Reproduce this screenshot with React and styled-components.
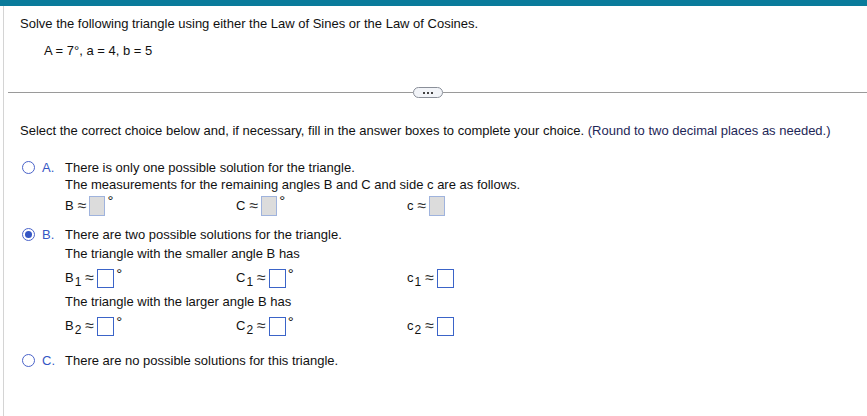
import styled, { createGlobalStyle } from "styled-components";

const GlobalStyle = createGlobalStyle`
  html, body {
    margin: 0;
    background: #fff;
  }
  body {
    font-family: "Liberation Sans", Arial, sans-serif;
    font-size: 13px;
    color: #111;
  }
`;

const Page = styled.div`
  border-top: 6px solid #0a7b9b;
  height: 410px;
  display: flex;
`;

const Frame = styled.div`
  margin-left: 3px;
  border-left: 1px solid #d4d4d4;
  flex: 1;
  padding-top: 10px;
`;

const Inner = styled.div`
  padding-left: 16px;
`;

const Line = styled.div`
  line-height: 16px;
  white-space: nowrap;
  padding-left: ${(p) => p.indent || 0}px;
  margin-top: ${(p) => p.top || 0}px;
`;

const Hint = styled.span`
  color: #1e2757;
`;

const Divider = styled.div`
  margin: 28px 0 0 4px;
  display: flex;
  align-items: center;
  &::before {
    content: "";
    width: 405px;
    height: 1px;
    background: #9a9a9a;
  }
  &::after {
    content: "";
    flex: 1;
    height: 1px;
    background: #9a9a9a;
  }
`;

const Pill = styled.div`
  width: 28px;
  height: 9px;
  border: 1px solid #8a8f99;
  border-radius: 6px;
  background: #f2f4f8;
  display: flex;
  align-items: center;
  justify-content: center;
  gap: 2px;
  i {
    width: 2px;
    height: 2px;
    background: #444;
  }
`;

const Choices = styled.div`
  margin-top: 21px;
  display: flex;
  flex-direction: column;
`;

const Choice = styled.div`
  display: flex;
  margin-top: ${(p) => p.top}px;
`;

const Radio = styled.div`
  width: 11px;
  height: 11px;
  border: 1.5px solid #4a63c9;
  border-radius: 50%;
  margin: 1px 7px 0 2px;
  display: flex;
  align-items: center;
  justify-content: center;
  flex-shrink: 0;
  &::after {
    content: "";
    width: 7px;
    height: 7px;
    border-radius: 50%;
    background: ${(p) => (p.checked ? "#3556c4" : "transparent")};
  }
`;

const Letter = styled.span`
  color: #3556c4;
  width: 23px;
  line-height: 16px;
  flex-shrink: 0;
`;

const Body = styled.div`
  display: flex;
  flex-direction: column;
`;

const AnswerRow = styled.div`
  display: grid;
  grid-template-columns: 171px 171px auto;
  margin-top: ${(p) => p.top}px;
  height: 20px;
  align-items: center;
`;

const Cell = styled.div`
  display: flex;
  align-items: center;
  white-space: nowrap;
`;

const Label = styled.span`
  display: flex;
  align-items: center;
  line-height: 16px;
`;

const Sub = styled.span`
  font-size: 12px;
  line-height: 12px;
  position: relative;
  top: 4px;
  margin-left: 1px;
`;

const Approx = styled.span`
  font-family: "Liberation Sans", Arial, sans-serif;
  font-size: 16px;
  line-height: 16px;
  color: #333;
  margin: 0 3px 0 4px;
`;

const Box = styled.span`
  display: inline-block;
  box-sizing: border-box;
  width: ${(p) => (p.filled ? 16 : 17)}px;
  height: ${(p) => (p.filled ? 20 : 19)}px;
  background: ${(p) => (p.filled ? "#dcdcdc" : "#fff")};
  border: ${(p) => (p.filled ? "1px solid #9fb3dd" : "1.5px solid #3b64c8")};
`;

const Deg = styled.span`
  align-self: flex-start;
  font-size: 15px;
  line-height: 12px;
  margin-left: 2px;
  margin-top: -1px;
`;

function Answer({ name, sub, degree, filled }) {
  return (
    <Cell>
      <Label>
        {name}
        {sub && <Sub>{sub}</Sub>}
        <Approx>≈</Approx>
      </Label>
      <Box filled={filled} />
      {degree && <Deg>°</Deg>}
    </Cell>
  );
}

export default function App() {
  return (
    <>
      <GlobalStyle />
      <Page>
        <Frame>
          <Inner>
            <Line>
              Solve the following triangle using either the Law of Sines or the
              Law of Cosines.
            </Line>
            <Line indent={24} top={11}>
              A = 7°, a = 4, b = 5
            </Line>
          </Inner>
          <Divider>
            <Pill>
              <i />
              <i />
              <i />
            </Pill>
          </Divider>
          <Inner>
            <Line top={25}>
              Select the correct choice below and, if necessary, fill in the
              answer boxes to complete your choice.{" "}
              <Hint>(Round to two decimal places as needed.)</Hint>
            </Line>
            <Choices>
              <Choice top={0}>
                <Radio />
                <Letter>A.</Letter>
                <Body>
                  <Line>There is only one possible solution for the triangle.</Line>
                  <Line top={1}>
                    The measurements for the remaining angles B and C and side c
                    are as follows.
                  </Line>
                  <AnswerRow top={3}>
                    <Answer name="B" degree filled />
                    <Answer name="C" degree filled />
                    <Answer name="c" filled />
                  </AnswerRow>
                </Body>
              </Choice>
              <Choice top={11}>
                <Radio checked />
                <Letter>B.</Letter>
                <Body>
                  <Line>There are two possible solutions for the triangle.</Line>
                  <Line top={3}>The triangle with the smaller angle B has</Line>
                  <AnswerRow top={6}>
                    <Answer name="B" sub="1" degree />
                    <Answer name="C" sub="1" degree />
                    <Answer name="c" sub="1" />
                  </AnswerRow>
                  <Line top={6}>The triangle with the larger angle B has</Line>
                  <AnswerRow top={6}>
                    <Answer name="B" sub="2" degree />
                    <Answer name="C" sub="2" degree />
                    <Answer name="c" sub="2" />
                  </AnswerRow>
                </Body>
              </Choice>
              <Choice top={17}>
                <Radio />
                <Letter>C.</Letter>
                <Body>
                  <Line>There are no possible solutions for this triangle.</Line>
                </Body>
              </Choice>
            </Choices>
          </Inner>
        </Frame>
      </Page>
    </>
  );
}
